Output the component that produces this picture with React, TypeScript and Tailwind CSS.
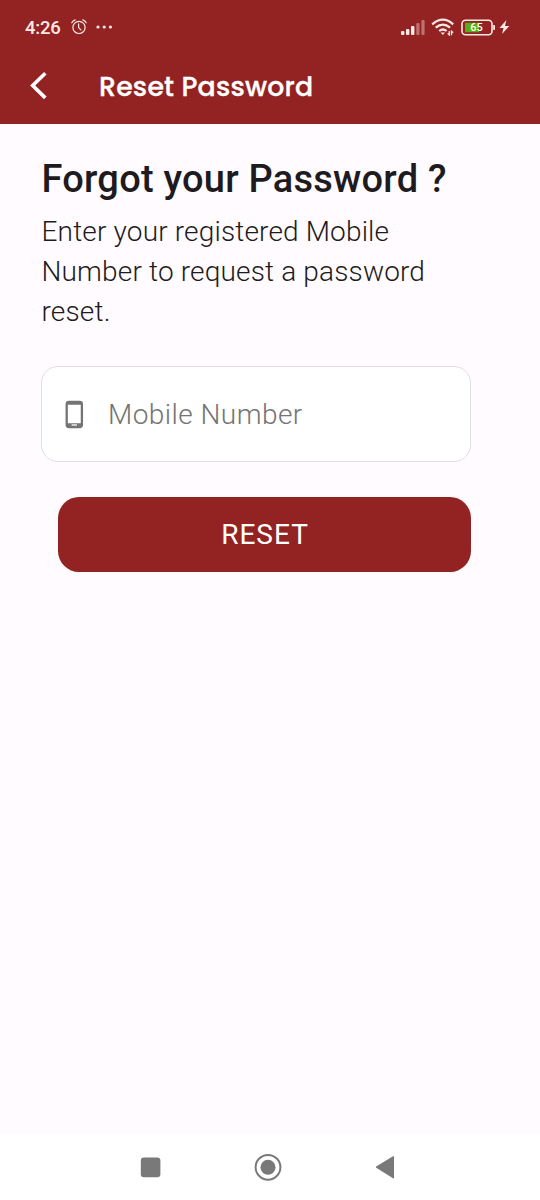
import React from 'react';

function StatusBar() {
  return (
    <div className="flex h-[54px] items-center pl-[25px] pr-[30px] text-[#ffe9e4]">
      <span className="relative top-px text-[18.5px] font-medium leading-none tracking-[-0.2px]">4:26</span>
      <svg className="ml-[9px]" width="18" height="18" viewBox="0 0 18 18" fill="none" stroke="currentColor" strokeWidth="1.2" strokeLinecap="round">
        <circle cx="9" cy="9.4" r="6.1" />
        <path d="M8.6 5.9v3.7l2.3 2.3M1.8 4.8Q2.8 2.6 5.2 1.9M16.2 4.8Q15.2 2.6 12.8 1.9" />
      </svg>
      <svg className="ml-[8px]" width="17" height="4" viewBox="0 0 17 4" fill="currentColor">
        <circle cx="2" cy="2" r="1.6" />
        <circle cx="8.2" cy="2" r="1.6" />
        <circle cx="14.4" cy="2" r="1.6" />
      </svg>
      <svg className="ml-auto" width="25" height="18" viewBox="0 0 25 18" fill="#ffe9e4">
        <rect x="1" y="13" width="3.4" height="4" rx="1" />
        <rect x="6" y="11" width="3.4" height="6" rx="1" />
        <rect x="11" y="8" width="3.4" height="9" rx="1" />
        <rect x="16.3" y="5" width="3.2" height="12" rx="1" opacity=".4" />
        <rect x="21.4" y="2" width="3.2" height="15" rx="1" opacity=".4" />
      </svg>
      <svg className="ml-[6px]" width="24" height="18" viewBox="0 0 24 18" fill="none" stroke="#ffe9e4" strokeWidth="2.2">
        <path d="M1.2 6.4Q12-3 22.2 6.4M4.7 9.7Q12 3.600 19 9.7M8.2 13Q12 10 15.6 13" />
        <path d="M9.600 14.6h4.400l-2.200 2.400z" fill="#ffe9e4" stroke="none" />
        <path d="M18.300 13v4l-1.600-1.600M20.500 17.200v-4l1.600 1.600" strokeWidth="1.300" />
      </svg>
      <svg className="ml-[6px]" width="35" height="17" viewBox="0 0 35 17">
        <rect x="1" y="1.3" width="30" height="14.4" rx="3.5" fill="none" stroke="#ffe9e4" strokeWidth="1.6" />
        <path d="M4 3.8h14v9.4H4z" fill="#55ae12" />
        <path d="M32.2 6h.8q1 0 1 1v3q0 1-1 1h-.8z" fill="#ffe9e4" />
        <text x="15.5" y="12.3" textAnchor="middle" fontSize="11" fontWeight="500" fill="#fff">65</text>
      </svg>
      <svg className="ml-[3px]" width="11" height="14" viewBox="0 0 11 14" fill="currentColor">
        <path d="M7.4 0 .5 8h4L3 14l7.3-8H6z" />
      </svg>
    </div>
  );
}

function AppBar() {
  return (
    <div className="flex h-[70px] items-start pl-[30px]">
      <svg className="mt-[17px]" width="18" height="29" viewBox="0 0 18 29" fill="none" stroke="#fff" strokeWidth="3.6">
        <path d="M15.3 2.2 2.7 14.5l12.6 12.4" />
      </svg>
      <h1 className="ml-[51px] mt-[13px] whitespace-nowrap font-['Poppins','Inter',sans-serif] text-[26.8px] font-medium leading-[40px] tracking-[0.2px] text-white [-webkit-text-stroke:0.3px_white]">
        Reset Password
      </h1>
    </div>
  );
}

function NavigationBar() {
  return (
    <nav className="flex h-[66px] items-center bg-white text-[#797979]">
      <svg className="ml-[140px]" width="21" height="21" viewBox="0 0 21 21" fill="currentColor">
        <rect x=".8" y=".6" width="19.6" height="19.6" rx="3" />
      </svg>
      <svg className="ml-[93px]" width="28" height="28" viewBox="0 0 28 28">
        <circle cx="14" cy="14.3" r="12.4" fill="none" stroke="currentColor" strokeWidth="2" />
        <circle cx="14" cy="14.3" r="7.5" fill="currentColor" />
      </svg>
      <svg className="ml-[93px]" width="20" height="24" viewBox="0 0 20 24" fill="currentColor">
        <path d="M18 1.2q1-.6 1 .5v21q0 1.1-1 .5L1.2 12.7q-.8-.6 0-1.2z" />
      </svg>
    </nav>
  );
}

export default function App() {
  return (
    <div className="flex h-[1200px] w-[540px] flex-col overflow-hidden bg-[#fffbff] font-['Roboto',sans-serif] text-[#1d1b20]">
      <header className="h-[124px] shrink-0 bg-[#932323]">
        <StatusBar />
        <AppBar />
      </header>
      <main className="flex-1 pl-[41px] pr-[69px] pt-[31px]">
        <h2 className="whitespace-nowrap pl-[0.5px] text-[38px] font-medium leading-[48px] tracking-[0.23px]">Forgot your Password ?</h2>
        <p className="mt-[9px] pl-[0.5px] text-[28px] font-light leading-[40px] tracking-[0.16px]">
          Enter your registered Mobile
          <br />
          Number to request a password
          <br />
          reset.
        </p>
        <div className="mt-[34px] flex h-[96px] items-center rounded-[17px] border border-[#e2dde2] bg-white pl-[23px] text-[#747474]">
          <svg width="19" height="29" viewBox="0 0 19 29">
            <rect x="1.7" y="1.9" width="15.2" height="25.2" rx="2.3" fill="none" stroke="currentColor" strokeWidth="2.3" />
            <path d="M2 3.2h15M2 24.8h15" stroke="currentColor" strokeWidth="3" />
            <path d="M6.6 25h5.4" stroke="#fff" strokeWidth="1.3" />
          </svg>
          <span className="ml-[24px] mt-[2px] whitespace-nowrap text-[28px] font-light leading-[40px] tracking-[0.45px]">Mobile Number</span>
        </div>
        <button className="ml-[17px] mt-[35px] flex h-[75px] w-[413px] items-center justify-center rounded-[21px] bg-[#932323] pl-px text-[28px] font-normal leading-none tracking-[1px] text-white">
          RESET
        </button>
      </main>
      <NavigationBar />
    </div>
  );
}
